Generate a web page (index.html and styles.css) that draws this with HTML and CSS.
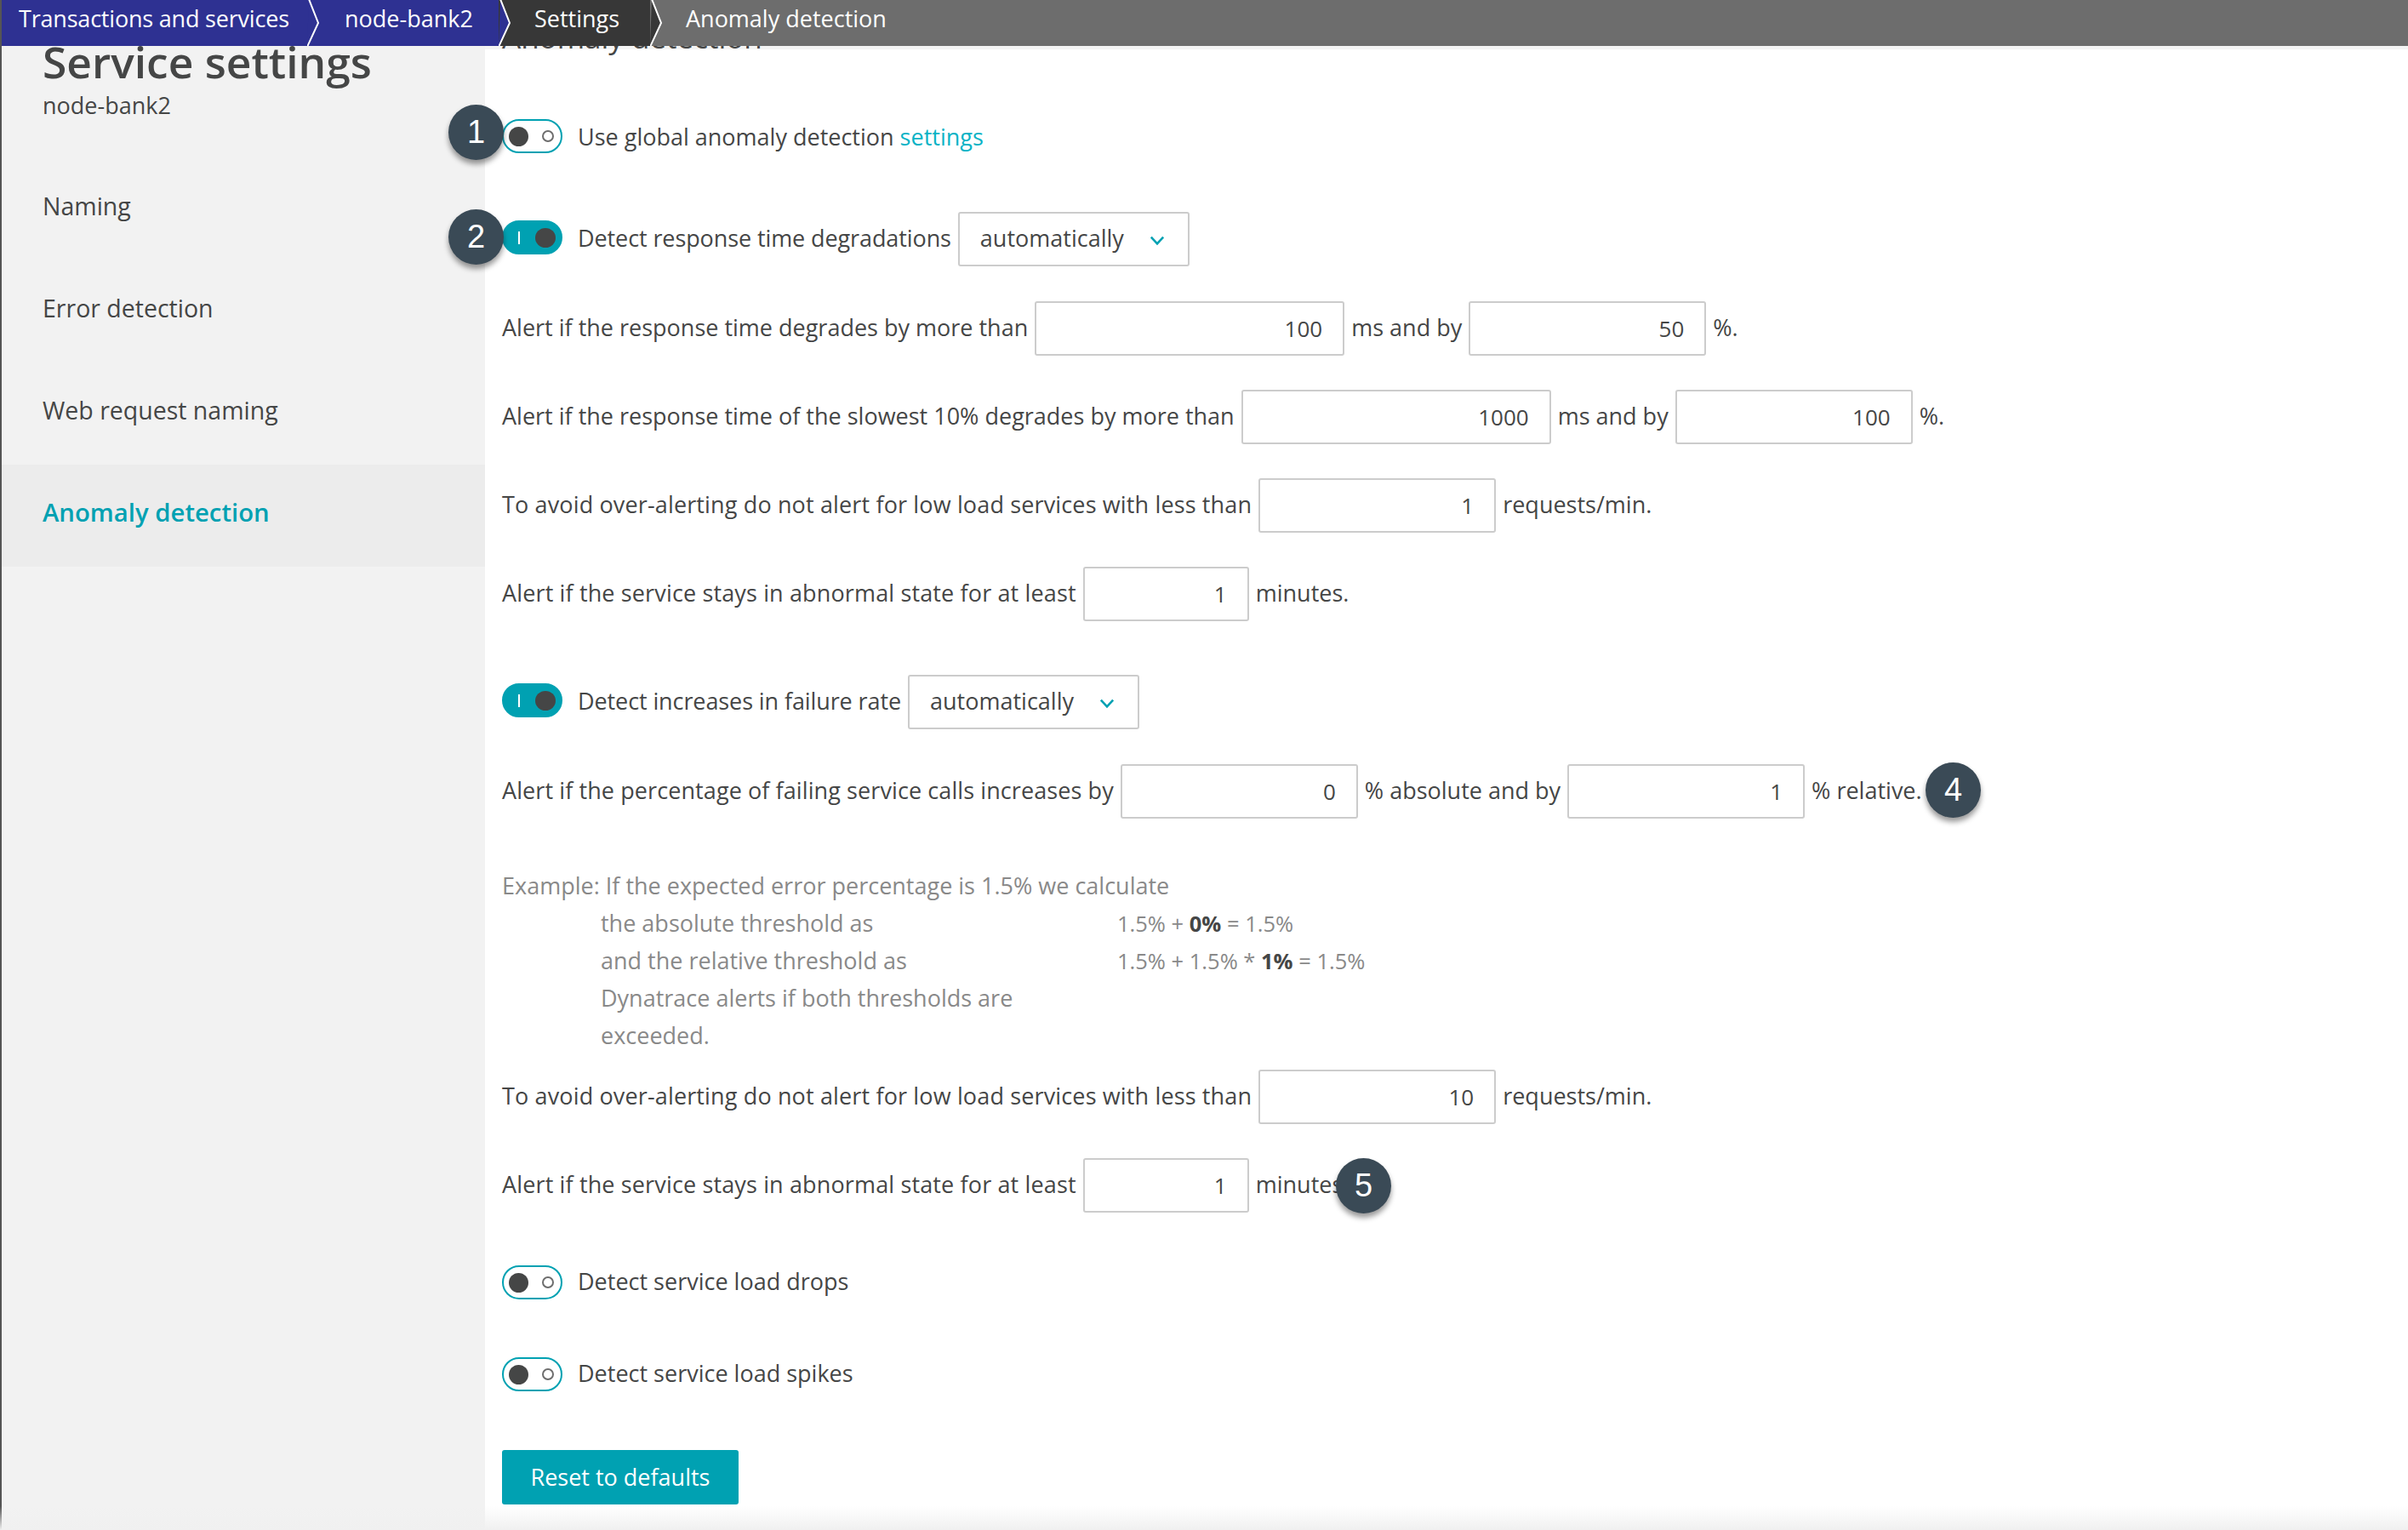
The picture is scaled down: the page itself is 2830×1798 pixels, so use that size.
FILE: index.html
```html
<!DOCTYPE html>
<html lang="en">
<head>
    <meta charset="UTF-8">
    <title>Service settings</title>
    <link rel="stylesheet" href="styles.css">
</head>
<body>
    <nav class="crumbs">
        <a class="crumb crumb-first">Transactions and services</a>
        <svg class="sep sep-blue" viewBox="0 0 16 54"><path d="M2 -1 L13 27 L0 55 Z" fill="#2e3192"/><path d="M2 -1 L13 27 L0 55" fill="none" stroke="#fff" stroke-width="2"/></svg>
        <a class="crumb crumb-blue">node-bank2</a>
        <svg class="sep sep-dark" viewBox="0 0 16 54"><path d="M2 -1 L13 27 L0 55 Z" fill="#2e3192"/><path d="M2 -1 L13 27 L0 55" fill="none" stroke="#fff" stroke-width="2"/></svg>
        <a class="crumb crumb-dark">Settings</a>
        <svg class="sep sep-grey" viewBox="0 0 16 54"><path d="M2 -1 L13 27 L0 55 Z" fill="#373737"/><path d="M2 -1 L13 27 L0 55" fill="none" stroke="#fff" stroke-width="2"/></svg>
        <a class="crumb crumb-grey">Anomaly detection</a>
    </nav>

    <div class="page">
        <aside class="sidebar">
            <h1>Service settings</h1>
            <p class="entity">node-bank2</p>
            <ul class="side-nav">
                <li>Naming</li>
                <li>Error detection</li>
                <li>Web request naming</li>
                <li class="active">Anomaly detection</li>
            </ul>
        </aside>

        <main class="content">
            <h2>Anomaly detection</h2>

            <div class="row row-first">
                <span class="toggle"><i class="knob"></i><i class="ring"></i></span>
                <span class="toggle-label">Use global anomaly detection <a class="link">settings</a></span>
                <span class="badge badge-one">1</span>
            </div>

            <div class="row row-toggle-head">
                <span class="toggle on"><i class="bar"></i><i class="knob"></i></span>
                <span class="toggle-label narrow">Detect response time degradations</span>
                <div class="select">automatically <svg viewBox="0 0 14 10"><path d="M1.5 2 L7 8 L12.5 2" fill="none" stroke="#00a1b2" stroke-width="2"/></svg></div>
                <span class="badge badge-two">2</span>
            </div>

            <div class="row row-tight">
                <span>Alert if the response time degrades by more than</span>
                <input class="field w-lg" value="100">
                <span>ms and by</span>
                <input class="field w-md" value="50">
                <span>%.</span>
            </div>
            <div class="row">
                <span>Alert if the response time of the slowest 10% degrades by more than</span>
                <input class="field w-lg" value="1000">
                <span>ms and by</span>
                <input class="field w-md" value="100">
                <span>%.</span>
            </div>
            <div class="row">
                <span class="wide">To avoid over-alerting do not alert for low load services with less than</span>
                <input class="field w-md" value="1">
                <span>requests/min.</span>
            </div>
            <div class="row">
                <span class="wide">Alert if the service stays in abnormal state for at least</span>
                <input class="field w-sm" value="1">
                <span>minutes.</span>
            </div>

            <div class="row row-section">
                <span class="toggle on"><i class="bar"></i><i class="knob"></i></span>
                <span class="toggle-label narrow">Detect increases in failure rate</span>
                <div class="select">automatically <svg viewBox="0 0 14 10"><path d="M1.5 2 L7 8 L12.5 2" fill="none" stroke="#00a1b2" stroke-width="2"/></svg></div>
            </div>
            <div class="row row-tight">
                <span class="wide-sm">Alert if the percentage of failing service calls increases by</span>
                <input class="field w-md" value="0">
                <span>% absolute and by</span>
                <input class="field w-md" value="1">
                <span>% relative.</span>
                <span class="badge badge-four">4</span>
            </div>

            <div class="example">
                <div class="example-head">Example: If the expected error percentage is 1.5% we calculate</div>
                <div class="example-grid">
                    <span>the absolute threshold as</span>
                    <span class="example-calc">1.5% + <b>0%</b> = 1.5%</span>
                    <span>and the relative threshold as</span>
                    <span class="example-calc">1.5% + 1.5% * <b>1%</b> = 1.5%</span>
                    <span class="example-note">Dynatrace alerts if both thresholds are exceeded.</span>
                </div>
            </div>

            <div class="row row-after-example">
                <span class="wide">To avoid over-alerting do not alert for low load services with less than</span>
                <input class="field w-md" value="10">
                <span>requests/min.</span>
            </div>
            <div class="row">
                <span class="wide">Alert if the service stays in abnormal state for at least</span>
                <input class="field w-sm" value="1">
                <span>minutes.</span>
                <span class="badge badge-five">5</span>
            </div>

            <div class="row row-short row-drops">
                <span class="toggle"><i class="knob"></i><i class="ring"></i></span>
                <span class="toggle-label">Detect service load drops</span>
            </div>
            <div class="row row-short row-spikes">
                <span class="toggle"><i class="knob"></i><i class="ring"></i></span>
                <span class="toggle-label">Detect service load spikes</span>
            </div>

            <button class="btn-reset">Reset to defaults</button>
        </main>
    </div>
    <div class="bottom-fade"></div>
</body>
</html>
```

FILE: styles.css
```css
* {
    box-sizing: border-box;
}
html, body {
    margin: 0;
    height: 100%;
    overflow: hidden;
}
body {
    font-family: "Open Sans", "Noto Sans", sans-serif;
    font-size: 27px;
    color: #454646;
    background: #fff;
    position: relative;
}

/* breadcrumb bar */
.crumbs {
    display: flex;
    height: 54px;
    line-height: 44px;
    color: #fff;
    background: #6d6d6d;
    border-left: 2px solid #555;
    position: relative;
    z-index: 5;
}
.crumb {
    display: block;
    height: 54px;
    white-space: nowrap;
}
.crumb-first {
    background: #2e3192;
    padding-left: 20px;
    width: 359px;
    letter-spacing: -0.2px;
}
.crumb-blue {
    background: #2e3192;
    padding-left: 28px;
    width: 209px;
}
.crumb-dark {
    background: #373737;
    padding-left: 26px;
    width: 162px;
}
.crumb-grey {
    padding-left: 26px;
}
.sep {
    flex: none;
    width: 16px;
    height: 54px;
}
.sep-blue { background: #2e3192; }
.sep-dark { background: #373737; }
.sep-grey { background: #6d6d6d; }

.page {
    display: flex;
    height: 1744px;
}

/* left column */
.sidebar {
    flex: none;
    width: 570px;
    background: #f2f2f2;
    border-left: 2px solid #555;
}
.sidebar h1 {
    margin: -10px 0 0 48px;
    font-size: 51.5px;
    line-height: 56px;
    font-weight: 600;
    white-space: nowrap;
}
.entity {
    margin: 6px 0 0 48px;
    line-height: 36px;
}
.side-nav {
    list-style: none;
    margin: 44px 0 0;
    padding: 0;
}
.side-nav li {
    height: 120px;
    line-height: 112px;
    padding-left: 48px;
    font-size: 28.5px;
}
.side-nav .active {
    background: #ececec;
    color: #00a1b2;
    font-size: 29.3px;
    font-weight: 600;
}

/* right column */
.content {
    flex: 1;
    padding-left: 20px;
    background: linear-gradient(#f4f4f4 4px, #fff 4px);
}
.content h2 {
    margin: -30px 0 0;
    height: 40px;
    font-size: 35px;
    line-height: 40px;
    font-weight: 400;
}
.row {
    display: flex;
    align-items: center;
    gap: 8px;
    height: 64px;
    margin-top: 40px;
    position: relative;
    white-space: nowrap;
}
.row > span {
    margin-bottom: 3px;
}
.row-first { margin-top: 66px; }
.row-toggle-head { margin-top: 55px; }
.row-tight { margin-top: 41px; }
.row-section { margin-top: 63px; }
.row-after-example { margin-top: 18px; }
.row-short { height: 40px; }
.row-drops { margin-top: 62px; }
.row-spikes { margin-top: 68px; }

.wide { letter-spacing: 0.14px; }
.wide-sm { letter-spacing: 0.09px; }
.narrow { letter-spacing: -0.1px; }

.toggle {
    flex: none;
    display: block;
    width: 71px;
    height: 40px;
    border: 2px solid #00a1b2;
    border-radius: 20px;
    background: #fff;
    position: relative;
    margin-right: 10px;
    top: -1px;
}
.row-short .toggle {
    top: 1px;
}
.toggle .knob {
    position: absolute;
    left: 6px;
    top: 7px;
    width: 23px;
    height: 23px;
    border-radius: 50%;
    background: #454646;
}
.toggle .ring {
    position: absolute;
    right: 8px;
    top: 11px;
    width: 14px;
    height: 14px;
    border: 2px solid #6d6d6d;
    border-radius: 50%;
}
.toggle.on {
    background: #00a1b2;
}
.toggle.on .knob {
    left: 37px;
    width: 24px;
}
.toggle.on .bar {
    position: absolute;
    left: 17px;
    top: 11px;
    width: 2px;
    height: 15px;
    background: #fff;
}
.link {
    color: #08b3c6;
}

.field {
    flex: none;
    height: 64px;
    padding: 0 24px;
    border: 2px solid #ccc;
    border-radius: 3px;
    background: #fff;
    font: inherit;
    font-size: 26px;
    color: inherit;
    text-align: right;
    outline: none;
}
.w-lg { width: 364px; }
.w-md { width: 279px; }
.w-sm { width: 195px; }

.select {
    flex: none;
    display: flex;
    align-items: center;
    justify-content: space-between;
    width: 272px;
    height: 64px;
    padding: 0 26px 3px 24px;
    border: 2px solid #ccc;
    border-radius: 3px;
}
.select svg {
    width: 20px;
    height: 13px;
    margin-top: 6px;
}

.example {
    margin-top: 57px;
    color: #898989;
    line-height: 44px;
}
.example-grid {
    display: grid;
    grid-template-columns: 607px auto;
    justify-content: start;
    margin-left: 116px;
}
.example-calc {
    font-size: 25.5px;
}
.example-grid b {
    color: #454646;
}
.example-note {
    width: 500px;
}

.btn-reset {
    display: block;
    width: 278px;
    height: 64px;
    margin-top: 69px;
    padding-bottom: 2px;
    border: none;
    border-radius: 3px;
    background: #00a1b2;
    color: #fff;
    font: inherit;
}

/* numbered callouts */
.badge {
    position: absolute;
    width: 65px;
    height: 65px;
    border-radius: 50%;
    background: #3a4a56;
    color: #fff;
    font-family: "Liberation Sans", sans-serif;
    font-size: 38px;
    line-height: 65px;
    text-align: center;
    box-shadow: 0 5px 6px rgba(0, 0, 0, 0.4);
    z-index: 2;
}
.badge-one {
    left: -63px;
    top: -7px;
}
.badge-two {
    left: -63px;
    top: -3px;
}
.badge-four {
    left: 1673px;
    top: -2px;
}
.badge-five {
    left: 980px;
    top: 0;
}

.bottom-fade {
    position: absolute;
    left: 0;
    right: 0;
    bottom: 0;
    height: 28px;
    background: linear-gradient(rgba(240, 240, 240, 0), #f0f0f0);
    pointer-events: none;
}
```
